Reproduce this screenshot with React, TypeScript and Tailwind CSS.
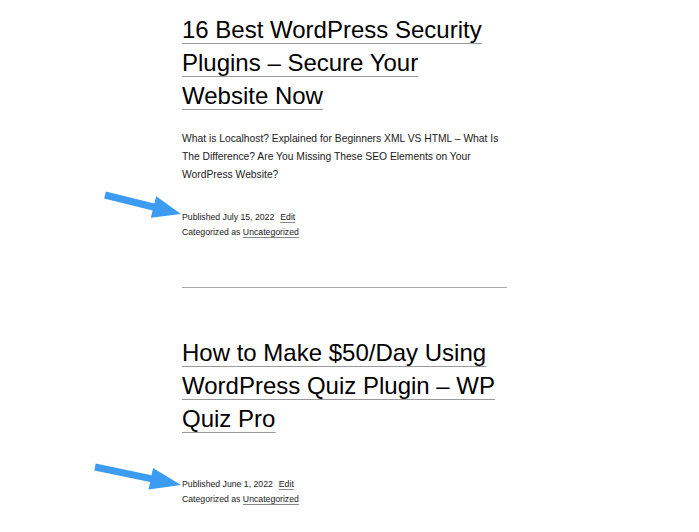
import React from "react";

const Arrow1 = () => (
  <svg className="absolute left-[100px] top-[185px]" width="90" height="40" viewBox="0 0 90 40">
    <polygon points="5.85,6.6 54.35,18.6 56.2,11.3 81,29 50.8,32.7 52.65,25.4 4.15,13.4" fill="#3b9cf2" />
  </svg>
);

const Arrow2 = () => (
  <svg className="absolute left-[90px] top-[455px]" width="95" height="40" viewBox="0 0 95 40">
    <polygon points="5.7,8.6 61.5,20.3 63.05,12.9 91,30 58.5,34.5 60.1,27.1 4.3,15.4" fill="#3b9cf2" />
  </svg>
);

function Post({
  title,
  excerpt,
  date,
  titleTop,
  metaTop,
}: {
  title: string;
  excerpt?: string;
  date: string;
  titleTop: string;
  metaTop: string;
}) {
  return (
    <article className="flex flex-col">
      <h2
        className={`${titleTop} text-[24px] leading-[33px] font-normal text-black underline decoration-[#9a9a9a] decoration-1 underline-offset-[5px]`}
      >
        <a>{title}</a>
      </h2>
      {excerpt ? (
        <p className="mt-[18px] text-[10.3px] leading-[18px] text-[#1a1a1a]">{excerpt}</p>
      ) : null}
      <div className={`${metaTop} text-[8.7px] leading-[15px] text-[#1a1a1a]`}>
        <div>
          Published {date}
          <span className="ml-[6px] underline decoration-[#888] underline-offset-2">Edit</span>
        </div>
        <div>
          Categorized as{" "}
          <span className="underline decoration-[#888] underline-offset-2">Uncategorized</span>
        </div>
      </div>
    </article>
  );
}

export default function App() {
  return (
    <div
      className="relative w-[699px] h-[532px] bg-white overflow-hidden"
      style={{ fontFamily: "'Liberation Sans', Arial, sans-serif" }}
    >
      <div className="ml-[182px] w-[325px] flex flex-col">
        <Post
          titleTop="mt-[13px]"
          title="16 Best WordPress Security Plugins – Secure Your Website Now"
          excerpt="What is Localhost? Explained for Beginners XML VS HTML – What Is The Difference? Are You Missing These SEO Elements on Your WordPress Website?"
          date="July 15, 2022"
          metaTop="mt-[26px]"
        />
        <div className="mt-[47px] h-px bg-[#a8a8a8]" />
        <Post
          titleTop="mt-[48px]"
          title="How to Make $50/Day Using WordPress Quiz Plugin – WP Quiz Pro"
          date="June 1, 2022"
          metaTop="mt-[42px]"
        />
      </div>
      <Arrow1 />
      <Arrow2 />
    </div>
  );
}
